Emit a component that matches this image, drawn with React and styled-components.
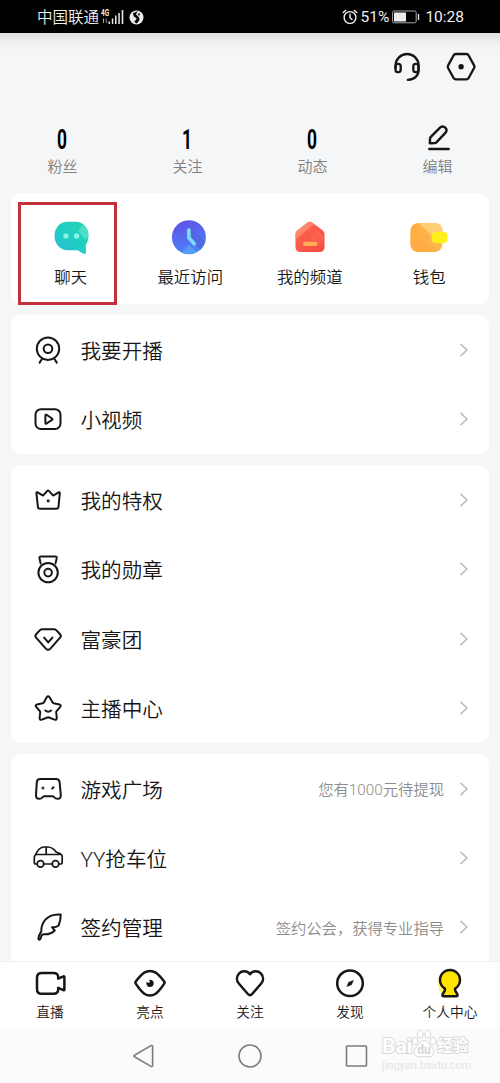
import React from "react";
import styled, { createGlobalStyle } from "styled-components";

const GlobalStyle = createGlobalStyle`
  * { box-sizing: border-box; }
  body {
    margin: 0;
    background: #f5f6f8;
    font-family: Roboto, "Noto Sans CJK SC", sans-serif;
    font-weight: 350;
    overflow: hidden;
  }
`;

const ICONS = {
  live: (
    <>
      <circle cx="16" cy="14.7" r="11.2" />
      <circle cx="16" cy="14.7" r="4.3" />
      <path d="M9.8 25.2 7.6 28.6M22.6 25.2l2.2 3.4" />
    </>
  ),
  video: (
    <>
      <rect x="3.5" y="6.2" width="25" height="19.8" rx="5.5" />
      <path d="M13.4 12.4v7.4q0 1.3 1.2.7l5.4-3.6q.9-.7 0-1.4l-5.4-3.7q-1.2-.7-1.2.6z" />
    </>
  ),
  crown: (
    <>
      <path d="M4.4 9.2q-.1-1.5 1.2-.9l5 3q.5.2.9-.2l3.8-4.2q.8-.8 1.6 0l3.8 4.2q.4.4.9.2l5-3q1.3-.6 1.2.9l-1.3 13.6q-.3 2-2.1 2H8q-1.9 0-2.1-2z" />
      <circle cx="16.2" cy="16.8" r=".6" />
    </>
  ),
  medal: (
    <>
      <circle cx="16.1" cy="19.6" r="9.7" />
      <circle cx="16.1" cy="19.6" r="3.8" />
      <path d="M8.6 10.4 7.5 5.2q-.3-1.7 1.4-1.7h14.5q1.6 0 1.3 1.7l-1.2 5.2" />
    </>
  ),
  diamond: (
    <>
      <path d="M10.2 6.2H22q1.3 0 2.2.9l4.1 4.4q1.2 1.4 0 2.8L18.4 25.6q-2.3 2.3-4.6 0L3.9 14.3q-1.2-1.4 0-2.8L8 7.1q.9-.9 2.2-.9z" />
      <path d="m12.2 14.6 4 4.8 4.2-4.8" />
    </>
  ),
  star: (
    <>
      <path d="M14.7 5.3q1.4-2 2.9 0l3 5.1q.4.6 1.1.8l5.7 1.2q2.2.7.8 2.5l-3.6 4.2q-.5.6-.4 1.4l.6 5.5q-.1 2.4-2.3 1.6l-5.5-2.1q-.8-.3-1.6 0l-5.5 2.1q-2.2.8-2.3-1.6l.6-5.5q.1-.8-.4-1.4l-3.6-4.2q-1.4-1.8.8-2.5l5.7-1.2q.7-.2 1.1-.8z" />
      <path d="M13.3 18.5q2.9 2.4 5.8 0" />
    </>
  ),
  game: (
    <>
      <path d="M8.2 6.1h15.9q3.1 0 3.5 3l1.2 12.8q.2 3.8-3.1 3.9-2.3 0-3.2-1.3-.8-1.3-2.1-1.3h-8q-1.3 0-2.1 1.3-.9 1.3-3.2 1.3-3.3-.1-3.1-3.9L4.8 9.1q.3-3 3.4-3z" />
      <circle cx="10.9" cy="14.9" r=".5" />
      <path d="m20.2 15.5 1.4-1.2" />
    </>
  ),
  car: (
    <g strokeWidth="1.7">
      <path d="M5.2 22H3.5q-1.2 0-1.2-1.2v-5.2q0-1.5 1-2.4Q6.6 5 12.3 5h3.3q5.2.2 8.5 5l4.2 1.7q1.9.9 1.9 2.8v6.3q0 1.2-1.2 1.2h-2.2M11.8 22h8.4M3.8 12.5h24.5M14.2 5v7.5" />
      <circle cx="8.5" cy="21.9" r="3.3" />
      <circle cx="23.5" cy="21.9" r="3.3" />
    </g>
  ),
  feather: (
    <path d="M28.7 3.6c-8-.6-12.6 1.8-15.7 5.6-3.2 4-3.9 7.6-3.7 11.2-1.7 2.6-2.7 5-2.9 7.2 0 1.3 1.5 1.4 2 .3.6-1.3.7-2.7 1.5-3.7.6-.7 1.3-.9 2.2-.9 5 .2 8.3-1.2 10.6-3.8l-2.700-3.300c2.300.400 4.700-.200 6.600-1.700 1.300-3 2.200-6.600 2.100-10.900z" />
  ),
};

const TAB_ICONS = {
  live: (
    <path d="M10 8h11.5q4.700 0 4.700 4.400v1.300l5.300-2.300q.9-.3.9.7v12.400q0 1-.9.700l-5.300-2.300v1.400q0 4.500-4.700 4.500H10q-5 0-5-4.600V12.600Q5 8 10 8z" />
  ),
  eye: (
    <>
      <path d="M3.6 18.4q-.6-.8 0-1.600Q8.500 10.400 12.300 7.600q5.700-3.400 11.400 0 3.800 2.800 8.700 9.200.6.8 0 1.600-4.900 7.400-8.700 10.400-5.700 3.600-11.400 0-3.800-3-8.700-10.400z" />
      <circle cx="18" cy="18.3" r="3.6" fill="#161616" stroke="none" />
      <circle cx="16.3" cy="16.3" r="1.5" fill="#fff" stroke="none" />
    </>
  ),
  heart: (
    <path d="M18 9.200C14.500 5.100 9.600 6 7.200 8.400c-3 3-3 7.400 0 10.600l8.900 10.200q1.900 2 3.800 0L28.800 19c3-3.200 3-7.600 0-10.600C26.400 6 21.500 5.100 18 9.200z" />
  ),
  compass: (
    <>
      <circle cx="18" cy="18.3" r="12.8" />
      <path d="m21.900 14.900-2.300 5-5.200 2.100 2.200-4.900z" fill="#161616" stroke="none" />
    </>
  ),
  me: (
    <>
      <ellipse cx="15" cy="20" rx="9" ry="12.5" fill="#fff35a" stroke="none" opacity=".75" />
      <path d="M12.900 23.600a10 10 0 1 1 10.200 0v1.800l2.300 4q.7 1.900-1.200 1.900H11.800q-1.900 0-1.200-1.900l2.300-4z" fill="#ffe400" />
    </>
  ),
};

const SHORTCUT_ICONS = {
  chat: (
    <>
      <defs>
        <linearGradient id="chat" x1="0" y1="1" x2="1" y2="0">
          <stop offset="0" stopColor="#33b7dc" />
          <stop offset=".45" stopColor="#1fcdc3" />
          <stop offset="1" stopColor="#22d6b5" />
        </linearGradient>
      </defs>
      <path d="M16 3.700h8.500C31.500 3.700 37 9.500 37 17.500c0 4.300-1.200 7-2.700 9.500l.2 7.200q-.2 2.400-2.500 1.600L26 32.200H16C8.500 32.200 3 26 3 18 3 9.800 8.500 3.700 16 3.700z" fill="url(#chat)" />
      <path d="m26.500 13 5-6.500q5 3.500 5.500 10.500l-2.500 5z" fill="#5fe5cf" opacity=".7" />
      <circle cx="14.5" cy="18" r="2.7" fill="#83f5e3" />
      <circle cx="25" cy="18" r="2.7" fill="#83f5e3" />
    </>
  ),
  recent: (
    <>
      <defs>
        <linearGradient id="recent" x1=".2" y1="0" x2=".5" y2="1">
          <stop offset="0" stopColor="#6350e8" />
          <stop offset="1" stopColor="#4886f6" />
        </linearGradient>
      </defs>
      <circle cx="18.4" cy="19.3" r="17" fill="url(#recent)" />
      <path d="m19 11 16 12q-1.500 5-5 8.500l-7-5.500z" fill="#5265dc" opacity=".75" />
      <path d="m11.500 34.500 7-8 7.500 8q-7 3-14.500 0z" fill="#58a6f8" opacity=".75" />
      <path d="M18.400 12v7.700l5.300 6" fill="none" stroke="#7edcff" strokeWidth="3.7" strokeLinecap="round" strokeLinejoin="round" />
    </>
  ),
  channel: (
    <>
      <defs>
        <linearGradient id="channel" x1="0" y1="0" x2="1" y2="1">
          <stop offset="0" stopColor="#fa6b4d" />
          <stop offset="1" stopColor="#f84743" />
        </linearGradient>
      </defs>
      <path d="M17 4.500q2.300-1.500 4.600 0L32 12.200q2 1.600 2 4v13q0 4.800-5 4.800H10q-5 0-5-4.800v-13q0-2.400 2-4z" fill="url(#channel)" />
      <path d="M5 21.500v-5.300q0-2.400 2-4l10-7.700q2.300-1.500 4.600 0l2 1.500z" fill="#ff9170" opacity=".8" />
      <path d="m19 19 8-7 7 7v4l-6 5z" fill="#ff7b5c" opacity=".35" />
      <rect x="12.5" y="23.8" width="14.5" height="4.2" rx="2.1" fill="#ffad54" />
    </>
  ),
  wallet: (
    <>
      <defs>
        <linearGradient id="wallet" x1="1" y1="0" x2="0" y2="1">
          <stop offset="0" stopColor="#ffc95a" />
          <stop offset="1" stopColor="#ffa03e" />
        </linearGradient>
      </defs>
      <rect x="1" y="5" width="32" height="29" rx="8" fill="url(#wallet)" />
      <path d="m9 5 13 11-14 18q-7-1-7-8V13q0-7 8-8z" fill="#ffad40" opacity=".65" />
      <path d="M9 5h16q8 0 8 8v2l-11 3z" fill="#ffd17c" opacity=".8" />
      <rect x="22.3" y="14" width="15.7" height="11" rx="4" fill="#fff01c" />
    </>
  ),
};

const STATS = [
  { label: "粉丝", value: "0" },
  { label: "关注", value: "1" },
  { label: "动态", value: "0" },
  { label: "编辑" },
];

const SHORTCUTS = [
  { icon: "chat", label: "聊天", marked: true },
  { icon: "recent", label: "最近访问" },
  { icon: "channel", label: "我的频道" },
  { icon: "wallet", label: "钱包" },
];

const MENUS = [
  [
    { icon: "live", label: "我要开播" },
    { icon: "video", label: "小视频" },
  ],
  [
    { icon: "crown", label: "我的特权" },
    { icon: "medal", label: "我的勋章" },
    { icon: "diamond", label: "富豪团" },
    { icon: "star", label: "主播中心" },
  ],
  [
    { icon: "game", label: "游戏广场", hint: "您有1000元待提现" },
    { icon: "car", label: "YY抢车位" },
    { icon: "feather", label: "签约管理", hint: "签约公会，获得专业指导" },
  ],
];

const TABS = [
  { icon: "live", label: "直播" },
  { icon: "eye", label: "亮点" },
  { icon: "heart", label: "关注" },
  { icon: "compass", label: "发现" },
  { icon: "me", label: "个人中心" },
];

function App() {
  return (
    <>
      <GlobalStyle />
      <Screen>
        <StatusBar>
          <Carrier>中国联通</Carrier>
          <Signal />
          <StatusRight>
            <Alarm />
            <span>51%</span>
            <Battery />
            <span>10:28</span>
          </StatusRight>
        </StatusBar>
        <Content>
          <TopActions>
            <LineIcon width="30" height="32" viewBox="0 0 30 32" $stroke={2.3}>
              <path d="M3.600 17.300v-2.800a11.500 11.500 0 0 1 23 0v4.200q0 9-10.800 10.200" />
              <rect x="3.5" y="12.8" width="5.2" height="8.4" rx="2.4" />
              <rect x="21.3" y="12.8" width="5.2" height="8.4" rx="2.4" />
            </LineIcon>
            <LineIcon width="32" height="32" viewBox="0 0 32 32" $stroke={2.3}>
              <path d="M10.700 3h10.800q1.300 0 2 1.200l5.600 10.200q.8 1.300 0 2.600l-5.600 10.200q-.7 1.200-2 1.200H10.700q-1.300 0-2-1.200L3.100 17q-.8-1.300 0-2.600L8.700 4.200Q9.400 3 10.700 3z" />
              <circle cx="16.1" cy="15.8" r="2.7" fill="#161616" stroke="none" />
            </LineIcon>
          </TopActions>
          <Stats>
            {STATS.map((s) => (
              <Stat key={s.label}>
                {s.value ? <StatValue>{s.value}</StatValue> : <Pencil />}
                <StatLabel>{s.label}</StatLabel>
              </Stat>
            ))}
          </Stats>
          <Cards>
            <ShortcutCard>
              {SHORTCUTS.map((s) => (
                <Shortcut key={s.icon}>
                  {s.marked && <Marker />}
                  <svg width="38" height="38" viewBox="0.5 0 38 38">{SHORTCUT_ICONS[s.icon]}</svg>
                  <span>{s.label}</span>
                </Shortcut>
              ))}
            </ShortcutCard>
            {MENUS.map((rows, i) => (
              <Card key={i} $cut={i === MENUS.length - 1}>
                {rows.map((r) => (
                  <Row key={r.icon}>
                    <LineIcon width="32" height="32" viewBox="0 0 32 32">{ICONS[r.icon]}</LineIcon>
                    <RowLabel>{r.label}</RowLabel>
                    {r.hint && <Hint>{r.hint}</Hint>}
                    <Chevron />
                  </Row>
                ))}
              </Card>
            ))}
          </Cards>
        </Content>
        <TabBar>
          {TABS.map((t) => (
            <Tab key={t.icon}>
              <LineIcon width="36" height="36" viewBox="0 0 36 36" $stroke={2.5}>{TAB_ICONS[t.icon]}</LineIcon>
              <span>{t.label}</span>
            </Tab>
          ))}
        </TabBar>
        <NavBar>
          <NavIcon viewBox="0 0 26 26"><path d="M3.500 12.200 20 2.600q1.600-.8 1.600.8v19.200q0 1.600-1.600.8L3.500 13.800q-1.200-.8 0-1.600z" /></NavIcon>
          <NavIcon viewBox="0 0 26 26"><circle cx="13" cy="13" r="11" /></NavIcon>
          <NavIcon viewBox="0 0 26 26"><rect x="2.500" y="3" width="20" height="20" rx=".8" /></NavIcon>
          <Watermark />
        </NavBar>
      </Screen>
    </>
  );
}

function Signal() {
  return (
    <SignalBox>
      <Network>4G</Network>
      <svg width="24" height="16" viewBox="0 0 24 16" fill="#e8e8e8">
        <path d="M1.500 10.500 3 9v5H2v-3zM4.500 9.500h1v3h1L5 14.200z" opacity=".7" />
        <path d="M7.500 12.500H9V15H7.500zM10.800 9.500h1.500V15h-1.500zM14 6.500h1.500V15H14zM17.300 4h1.500v11h-1.500zM20.700 1h1.600v14h-1.600z" />
      </svg>
      <svg width="15" height="15" viewBox="0 0 15 15">
        <circle cx="7.5" cy="7.5" r="7" fill="#ececec" />
        <path d="M3.800 3.300 8.600 1.300 7 4.500l3.300 3.300q.8 2.800-2.600 5.600L5.200 12l2.600-3.600L4.900 6.600z" fill="#050505" />
        <path d="m8.600 4.200 2.300-1.500-.7 3.600z" fill="#050505" />
      </svg>
    </SignalBox>
  );
}

function Alarm() {
  return (
    <svg width="16" height="16" viewBox="0 0 16 16" fill="none" stroke="#eee" strokeWidth="1.4" strokeLinecap="round">
      <circle cx="8" cy="8.5" r="5.9" />
      <path d="M8 5.200v3.500l2 1.800M1.200 3.600 3.600 1.400M14.800 3.600l-2.400-2.200" />
    </svg>
  );
}

function Battery() {
  return (
    <svg width="28" height="14" viewBox="0 0 28 14">
      <rect x=".6" y="1" width="23.6" height="11.8" rx="1.5" fill="none" stroke="#a9a9a9" strokeWidth="1" />
      <path d="M2 2.500h12v9H2z" fill="#ececec" />
      <path d="M25.800 4h1.400v6h-1.400z" fill="#ddd" />
    </svg>
  );
}

function Pencil() {
  return (
    <LineIcon width="26" height="28" viewBox="0 0 26 28" $stroke={2.4}>
      <path d="m4.800 19.300.3-5q.1-.8.7-1.400l9.500-9.500q2.600-2 5 .3 2.300 2.400.3 5L11.400 18.400q-.6.6-1.400.7z" />
      <path d="M4.300 25h19.400" />
    </LineIcon>
  );
}

function Chevron() {
  return (
    <svg width="10" height="16" viewBox="0 0 10 16" fill="none" stroke="#bfbfbf" strokeWidth="1.7">
      <path d="m1.500 1.800 6.400 6.200-6.400 6.200" />
    </svg>
  );
}

function Watermark() {
  return (
    <Mark>
      <MarkRow>
        <b>Bai</b>
        <Paw width="26" height="30" viewBox="0 0 26 30">
          <ellipse cx="4" cy="12" rx="2.8" ry="3.8" />
          <ellipse cx="9.3" cy="5.2" rx="2.8" ry="4" />
          <ellipse cx="16.7" cy="5.2" rx="2.8" ry="4" />
          <ellipse cx="22" cy="12" rx="2.8" ry="3.8" />
          <path d="M13 11.500c4 0 5 4 7.500 6.500 4.500 4.500 2 10-3 9.800q-4.500-.8-9 0c-5 .2-7.500-5.300-3-9.800C8 15.500 9 11.500 13 11.500z" />
          <text x="13" y="25" textAnchor="middle">du</text>
        </Paw>
        <em>经验</em>
      </MarkRow>
      <MarkUrl>jingyan.baidu.com</MarkUrl>
    </Mark>
  );
}

const Screen = styled.div`
  width: 500px;
  height: 1083px;
  display: flex;
  flex-direction: column;
  overflow: hidden;
  color: #161616;
`;

const StatusBar = styled.div`
  height: 33px;
  flex: none;
  display: flex;
  align-items: center;
  padding: 1px 36px 0 37px;
  background: #000;
  color: #f0f0f0;
  font-size: 15.5px;
`;

const Carrier = styled.span`
  margin-top: -2px;
`;

const SignalBox = styled.div`
  display: flex;
  align-items: center;
  gap: 4px;
  position: relative;
  margin-left: 2px;
`;

/* network type sits over the signal arrows */
const Network = styled.span`
  position: absolute;
  left: 0;
  top: 0;
  font-size: 9px;
  line-height: 8px;
  font-weight: 700;
  transform: scaleX(0.72);
  transform-origin: left;
`;

const StatusRight = styled.div`
  margin-left: auto;
  display: flex;
  align-items: center;
  gap: 3px;
  font-weight: 400;

  span:last-child {
    margin-left: 2px;
  }
`;

const Content = styled.main`
  height: 928px;
  flex: none;
  overflow: hidden;
  background: linear-gradient(#dcdddf, #eeeff1 9px, #f5f6f8 18px);
`;

const TopActions = styled.div`
  display: flex;
  justify-content: flex-end;
  gap: 23px;
  padding: 18px 23px 0 0;
`;

const LineIcon = styled.svg`
  flex: none;
  fill: none;
  stroke: #161616;
  stroke-width: ${(p) => p.$stroke || 2};
  stroke-linecap: round;
  stroke-linejoin: round;
`;

const Stats = styled.div`
  display: grid;
  grid-template-columns: repeat(4, 1fr);
  margin-top: 41px;
`;

const Stat = styled.div`
  display: flex;
  flex-direction: column;
  align-items: center;
`;

const StatValue = styled.div`
  height: 28px;
  line-height: 31px;
  font-size: 28px;
  font-weight: 700;
  color: #000;
  transform: scaleX(0.62);
`;

const StatLabel = styled.div`
  margin-top: 4px;
  font-size: 15px;
  line-height: 22px;
  color: #808080;
`;

const Cards = styled.div`
  display: flex;
  flex-direction: column;
  gap: 11.2px;
  padding: 15px 11px 0;
`;

const Card = styled.section`
  border-radius: ${(p) => (p.$cut ? "10px 10px 0 0" : "10px")};
  background: #fff;
`;

const ShortcutCard = styled(Card)`
  height: 111px;
  display: grid;
  grid-template-columns: repeat(4, 1fr);
`;

const Shortcut = styled.div`
  position: relative;
  display: flex;
  flex-direction: column;
  align-items: center;
  padding-top: 25px;
  font-size: 16.4px;
  line-height: 24px;

  span {
    margin-top: 10px;
  }
`;

const Marker = styled.div`
  position: absolute;
  left: 7px;
  top: 9px;
  width: 99px;
  height: 103px;
  border: 3px solid #c2303b;
`;

const Row = styled.div`
  height: 69.4px;
  display: flex;
  align-items: center;
  padding: 0 20px 0 21px;
`;

const RowLabel = styled.span`
  margin: 0 auto 0 16.5px;
  font-size: 20.6px;
`;

const Hint = styled.span`
  margin: -1px 15px 0 0;
  font-size: 15.3px;
  color: #8c8c8c;
`;

const TabBar = styled.nav`
  height: 68px;
  flex: none;
  display: grid;
  grid-template-columns: repeat(5, 1fr);
  border-top: 1px solid #efeff0;
  background: #fff;
`;

const Tab = styled.div`
  display: flex;
  flex-direction: column;
  align-items: center;
  padding-top: 3px;
  font-size: 13.7px;
  line-height: 22px;
`;

const NavBar = styled.div`
  position: relative;
  flex: 1;
  display: flex;
  justify-content: center;
  align-items: center;
  gap: 80.5px;
  background: #fbfbfb;
`;

const NavIcon = styled.svg`
  width: 26px;
  height: 26px;
  fill: none;
  stroke: #7c7c7c;
  stroke-width: 1.6;
`;

const Mark = styled.div`
  position: absolute;
  left: 382px;
  top: 0;
  width: 92px;
  color: #fff;
`;

const MarkRow = styled.div`
  display: flex;
  align-items: flex-end;
  height: 30px;
  font-size: 21px;
  line-height: 25px;

  b,
  em {
    font-style: normal;
    font-weight: 700;
    -webkit-text-stroke: 1.8px #d8d8d8;
    paint-order: stroke fill;
  }

  em {
    font-size: 15.5px;
  }
`;

const Paw = styled.svg`
  margin-left: -1px;
  fill: #fff;
  stroke: #d8d8d8;
  stroke-width: 1;

  text {
    font-size: 12px;
    font-weight: 700;
    fill: #d4d4d4;
    stroke: none;
  }
`;

const MarkUrl = styled.div`
  font-size: 11px;
  line-height: 14px;
  font-weight: 400;
  color: #e4e4e4;
`;

export default App;
